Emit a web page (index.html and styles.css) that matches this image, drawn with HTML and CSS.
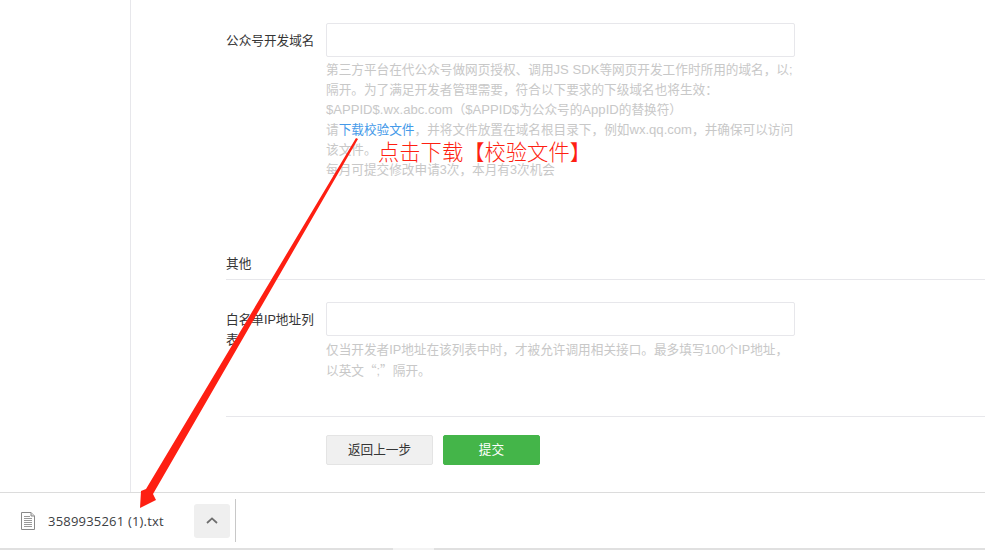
FILE: index.html
```html
<!DOCTYPE html>
<html lang="zh-CN">
<head>
<meta charset="utf-8">
<title>公众号开发域名</title>
<link rel="stylesheet" href="styles.css">
</head>
<body>
<div class="page">
  <aside class="sidebar"></aside>
  <main class="main">
    <div class="form">
      <div class="row row-first">
        <label class="label">公众号开发域名</label>
        <div class="field">
          <div class="input"></div>
          <p class="hint">第三方平台在代公众号做网页授权、调用<span class="lat">JS SDK</span>等网页开发工作时所用的域名，以;隔开。为了满足开发者管理需要，符合以下要求的下级域名也将生效：<br><span class="lat">$APPID$.wx.abc.com</span>（<span class="lat">$APPID$</span>为公众号的<span class="lat">AppID</span>的替换符）<br>请<a class="link">下载校验文件</a>，并将文件放置在域名根目录下，例如<span class="lat">wx.qq.com</span>，并确保可以访问该文件。<br>每月可提交修改申请3次，本月有3次机会</p>
        </div>
      </div>
      <h3 class="section">其他</h3>
      <div class="row row-second">
        <label class="label">白名单IP地址列表</label>
        <div class="field">
          <div class="input"></div>
          <p class="hint hint-second">仅当开发者IP地址在该列表中时，才被允许调用相关接口。最多填写100个IP地址，以英文<span class="cjk">“</span>;<span class="cjk">”</span>隔开。</p>
        </div>
      </div>
      <div class="actions">
        <button class="btn btn-default">返回上一步</button>
        <button class="btn btn-primary">提交</button>
      </div>
    </div>
  </main>
</div>
<footer class="downloads">
  <svg class="file-icon" width="14" height="18" viewBox="0 0 14 18">
    <path d="M.5.5h9.5l3.5 3.5v13.5H.5z" fill="#fff" stroke="#8a8a8a"/>
    <path d="M10 .5v3.5h3.5" fill="#ddd" stroke="#8a8a8a"/>
    <path d="M3 4.5h6M3 6.5h8M3 8.5h8M3 10.5h8M3 12.5h8M3 14.5h8" stroke="#9a9a9a"/>
  </svg>
  <span class="file-name">3589935261 (1).txt</span>
  <span class="chevron-btn">
    <svg width="12" height="7" viewBox="0 0 12 7"><path d="M1 6l5-4.6L11 6" fill="none" stroke="#6e6e6e" stroke-width="1.8"/></svg>
  </span>
  <span class="sep"></span>
</footer>
<div class="strip"><span class="strip-thumb"></span></div>
<span class="note">点击下载【校验文件】</span>
<svg class="arrow" width="985" height="550" viewBox="0 0 985 550">
  <polygon points="356,138 358,139 153,494 156,500 140,508 141,491 146,489" fill="#fe1f12"/>
</svg>
</body>
</html>
```
FILE: styles.css
```css
* { box-sizing: border-box; }
html, body { margin: 0; height: 100%; }
body {
  display: flex;
  flex-direction: column;
  height: 550px;
  overflow: hidden;
  background: #fff;
  font-family: "Liberation Sans", "Noto Sans CJK SC", sans-serif;
  font-size: 12.65px;
  color: #353535;
  position: relative;
}
.page { flex: 1; display: flex; min-height: 0; overflow: hidden; }
.sidebar { width: 131px; flex: none; border-right: 1px solid #e7e7eb; }
.main { flex: 1; min-width: 0; padding-left: 95px; }
.form { display: flex; flex-direction: column; }
.row { display: flex; }
.row-first { padding-top: 23px; height: 234px; }
.row-second { padding-top: 22px; height: 137px; border-bottom: 1px solid #e7e7eb; }
.label { width: 100px; flex: none; line-height: 20px; padding-top: 8px; }
.field { width: 469px; flex: none; }
.input { height: 34px; border: 1px solid #e7e7eb; border-radius: 2px; background: #fff; }
.hint { margin: 3px 0 0; line-height: 20px; color: #c8c8c8; word-break: break-all; }
.hint-second { margin-top: 4px; }
.lat { font-size: 13.1px; }
.cjk { font-family: "Noto Sans CJK SC", sans-serif; }
.link { color: #459ae9; }
.section { margin: 0; height: 46px; padding-top: 20px; line-height: 20px; font-size: 12.65px; font-weight: 400; color: #353535; border-bottom: 1px solid #e7e7eb; }
.actions { display: flex; gap: 10px; padding: 18px 0 0 100px; }
.btn { height: 30px; padding: 0; border-radius: 2px; font: inherit; font-size: 12.65px; line-height: 28px; }
.btn-default { width: 107px; border: 1px solid #e4e4e4; background: #f0f0f0; color: #353535; }
.btn-primary { width: 97px; border: 1px solid #44b549; background: #44b549; color: #fff; }
.downloads {
  flex: none;
  height: 56px;
  display: flex;
  align-items: center;
  border-top: 1px solid #dcdcdc;
  padding-left: 21px;
  background: #fff;
}
.file-icon { flex: none; }
.file-name { margin-left: 13px; width: 146px; font-family: "Open Sans", sans-serif; font-size: 13px; letter-spacing: .2px; color: #3c4043; white-space: nowrap; }
.chevron-btn { width: 36px; height: 34px; flex: none; display: flex; align-items: center; justify-content: center; background: #efefef; border-radius: 3px; }
.sep { width: 1px; height: 43px; margin-left: 5px; background: #c8c8c8; flex: none; }
.strip { flex: none; height: 2px; background: #e0e0e0; display: flex; padding-left: 393px; }
.strip-thumb { width: 41px; background: #f3f3f3; }
.note { position: absolute; left: 378px; top: 136px; font-size: 21.3px; font-weight: 300; line-height: 30px; color: #fe1f12; font-family: "Noto Sans CJK SC", sans-serif; white-space: nowrap; }
.arrow { position: absolute; left: 0; top: 0; pointer-events: none; }
```
